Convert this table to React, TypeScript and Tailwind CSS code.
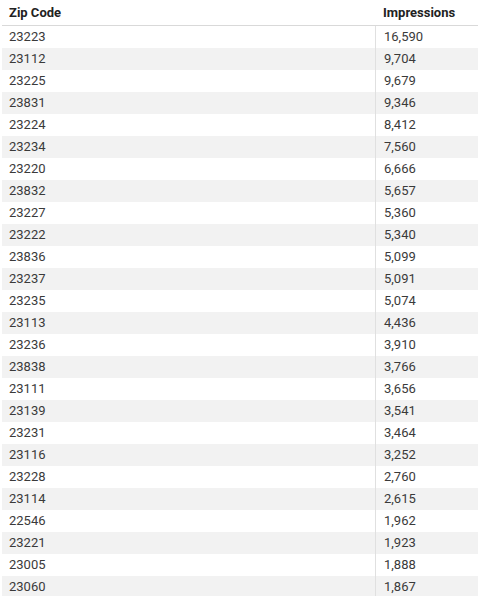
const rows: [string, string][] = [
  ['23223', '16,590'],
  ['23112', '9,704'],
  ['23225', '9,679'],
  ['23831', '9,346'],
  ['23224', '8,412'],
  ['23234', '7,560'],
  ['23220', '6,666'],
  ['23832', '5,657'],
  ['23227', '5,360'],
  ['23222', '5,340'],
  ['23836', '5,099'],
  ['23237', '5,091'],
  ['23235', '5,074'],
  ['23113', '4,436'],
  ['23236', '3,910'],
  ['23838', '3,766'],
  ['23111', '3,656'],
  ['23139', '3,541'],
  ['23231', '3,464'],
  ['23116', '3,252'],
  ['23228', '2,760'],
  ['23114', '2,615'],
  ['22546', '1,962'],
  ['23221', '1,923'],
  ['23005', '1,888'],
  ['23060', '1,867'],
]

export default function App() {
  return (
    <div className="w-[478px] h-[596px] overflow-hidden bg-white pl-[2px] font-['Roboto',sans-serif] text-[13px]">
      <div className="flex h-[26px] items-center border-b border-[#d9d9d9] font-bold text-[#222]">
        <div className="w-[373px] pl-[7px]">Zip Code</div>
        <div className="flex-1 pl-[8px]">Impressions</div>
      </div>
      {rows.map(([zip, imp], i) => (
        <div
          key={zip}
          className={`flex h-[22px] items-center text-[#3a3a3a] ${i % 2 === 1 ? 'bg-[#f2f2f2]' : 'bg-white'}`}
        >
          <div className="w-[373px] pl-[7px]">{zip}</div>
          <div className="flex h-full flex-1 items-center border-l border-[#e0e0e0] pl-[8px]">{imp}</div>
        </div>
      ))}
    </div>
  )
}
